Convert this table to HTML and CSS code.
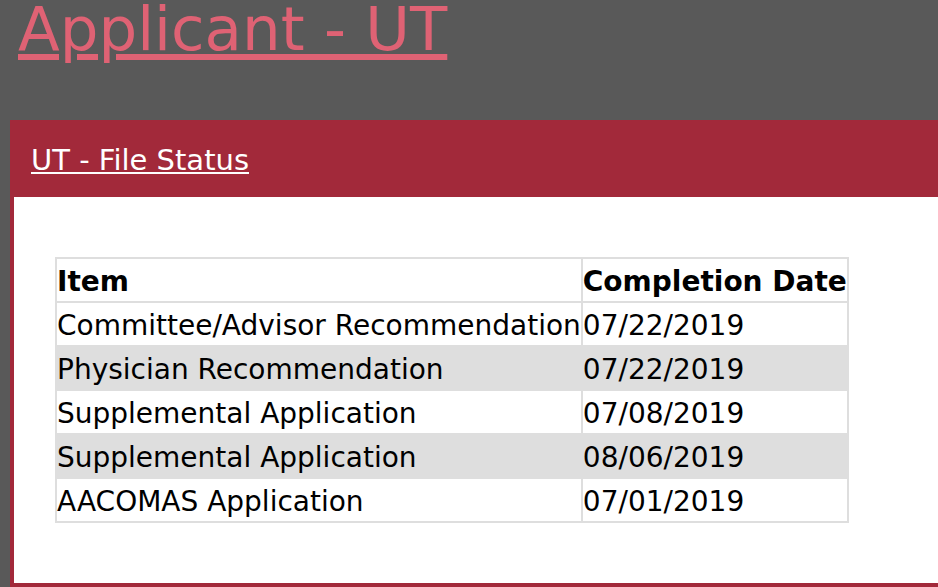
FILE: index.html
```html
<!DOCTYPE html>
<html>
<head>
<meta charset="utf-8">
<link rel="stylesheet" href="styles.css">
</head>
<body>
<h1 class="page-title"><a href="#">Applicant - UT</a></h1>
<section class="panel">
  <div class="panel-head"><a href="#">UT - File Status</a></div>
  <div class="panel-body">
    <table class="status">
      <tr><th>Item</th><th>Completion Date</th></tr>
      <tr><td>Committee/Advisor Recommendation</td><td>07/22/2019</td></tr>
      <tr class="alt"><td>Physician Recommendation</td><td>07/22/2019</td></tr>
      <tr><td>Supplemental Application</td><td>07/08/2019</td></tr>
      <tr class="alt"><td>Supplemental Application</td><td>08/06/2019</td></tr>
      <tr><td>AACOMAS Application</td><td>07/01/2019</td></tr>
    </table>
  </div>
</section>
</body>
</html>
```
FILE: styles.css
```css
html, body {
  margin: 0;
  padding: 0;
}
body {
  background: #595959;
  font-family: "DejaVu Sans", Verdana, sans-serif;
  height: 587px;
  overflow: hidden;
}
.page-title {
  margin: 0;
  padding-left: 18px;
  font-size: 61px;
  font-weight: normal;
  line-height: 58px;
  height: 120px;
}
.page-title a {
  color: #df6274;
}
.panel {
  margin-left: 10px;
  background: #a2293a;
  padding: 0 0 5px 4px;
}
.panel-head {
  height: 77px;
  box-sizing: border-box;
  margin-left: -4px;
  padding: 24px 0 0 21px;
  font-size: 29px;
  line-height: 32px;
}
.panel-head a {
  color: #ffffff;
}
.panel-body {
  background: #ffffff;
  padding: 60px 41px 60px 41px;
}
.status {
  border-collapse: collapse;
  border: 2px solid #dedede;
  font-size: 28px;
  color: #000;
}
.status th, .status td {
  border: 2px solid #dedede;
  padding: 4px 0 0 0;
  line-height: 38px;
  text-align: left;
  white-space: nowrap;
}
.status th {
  font-weight: bold;
}
.status tr.alt td {
  background: #dedede;
}
```
